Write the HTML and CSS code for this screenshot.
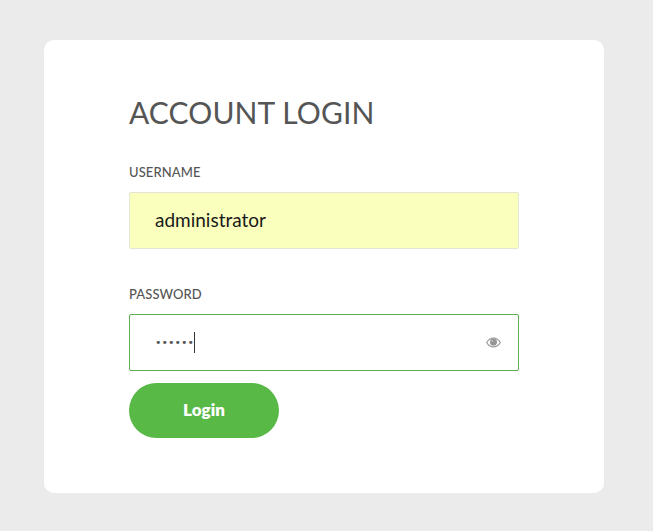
FILE: index.html
```html
<!DOCTYPE html>
<html lang="en">
<head>
<meta charset="utf-8">
<title>Account Login</title>
<link rel="stylesheet" href="styles.css">
</head>
<body>
<main class="card">
  <h1 class="title">ACCOUNT LOGIN</h1>
  <form class="form">
    <div class="label">USERNAME</div>
    <div class="field field-filled"><span class="value">administrator</span></div>
    <div class="label label-second">PASSWORD</div>
    <div class="field field-focus">
      <span class="dots">••••••</span><span class="caret"></span>
      <svg class="eye" viewBox="0 0 16 12" width="15" height="11" aria-hidden="true">
        <path d="M0.5 6C2.3 2.9 5 1.2 8 1.2S13.7 2.9 15.5 6C13.7 9.1 11 10.8 8 10.8S2.3 9.1 0.5 6Z" fill="none" stroke="#9a9a9a" stroke-width="1.3"/>
        <circle cx="8" cy="5.6" r="3.8" fill="#959595"/>
        <circle cx="6.8" cy="4.4" r="0.9" fill="#d0d0d0"/>
      </svg>
    </div>
    <button class="btn" type="button">Login</button>
  </form>
</main>
</body>
</html>
```
FILE: styles.css
```css
* { box-sizing: border-box; }
html, body { margin: 0; height: 100%; }
body {
  background: #ebebeb;
  padding: 40px 49px 38px 44px;
  font-family: Lato, "Open Sans", sans-serif;
  overflow: hidden;
}
.card {
  width: 560px;
  height: 453px;
  background: #fff;
  border-radius: 10px;
  padding: 54px 85px 0 85px;
}
.title {
  margin: 0;
  font-size: 30px;
  line-height: 36px;
  font-weight: 400;
  color: #555;
  letter-spacing: 0.1px;
}
.form { display: flex; flex-direction: column; }
.label {
  margin-top: 34px;
  font-size: 13px;
  line-height: 16px;
  font-weight: 500;
  color: #555;
  letter-spacing: 0.1px;
}
.label-second { margin-top: 37px; }
.field {
  margin-top: 12px;
  height: 57px;
  display: flex;
  align-items: center;
  padding-left: 25px;
  padding-right: 17px;
  border-radius: 2px;
}
.field-filled { background: #fbffbd; border: 1px solid #e4e4d4; padding-bottom: 2px; }
.field-focus { background: #fff; border: 1px solid #5fae52; }
.value { font-size: 19px; color: #1a1a1a; }
.dots { font-size: 11px; color: #555; letter-spacing: 0; font-family: "DejaVu Sans", sans-serif; }
.caret { width: 1px; height: 21px; background: #333; }
.eye { margin-left: auto; }
.btn {
  margin-top: 12px;
  width: 150px;
  height: 55px;
  border: 0;
  border-radius: 28px;
  background: #58b947;
  color: #fff;
  padding: 0 0 2px;
  font: 800 17px Lato, "Open Sans", sans-serif;
}
```
